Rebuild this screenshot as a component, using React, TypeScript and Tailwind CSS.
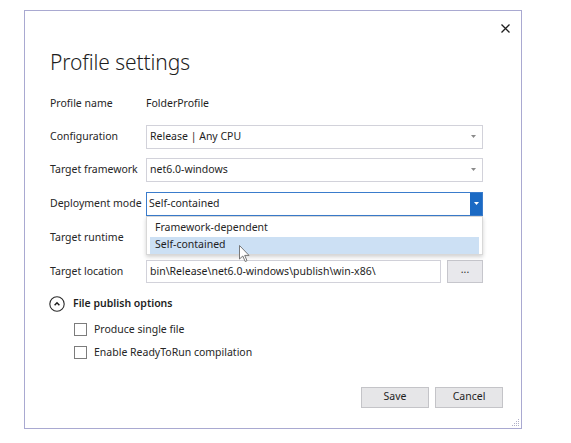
import React from 'react';

const labelCls = 'w-[96px] shrink-0 whitespace-nowrap text-[#262626]';

function Caret({ white = false }: { white?: boolean }) {
  return (
    <svg width="5" height="3" viewBox="0 0 5 3">
      <path d="M0 0 L5 0 L2.5 3 Z" fill={white ? '#ffffff' : '#8a8a8a'} />
    </svg>
  );
}

function Select({ value }: { value: string }) {
  return (
    <div className="flex h-[24px] w-[337px] items-center border border-[#d2d2da] bg-white pl-[3px] pr-[6px]">
      <span className="flex-1 text-[#1e1e1e]">{value}</span>
      <Caret />
    </div>
  );
}

function Row({ label, children, className = '' }: { label: string; children: React.ReactNode; className?: string }) {
  return (
    <div className={`flex h-[24px] w-[433px] items-center ${className}`}>
      <span className={labelCls}>{label}</span>
      {children}
    </div>
  );
}

function Checkbox({ label, className = '' }: { label: string; className?: string }) {
  return (
    <div className={`ml-[24px] flex h-[16px] items-center ${className}`}>
      <div className="h-[13px] w-[13px] border border-[#7c7c7c] bg-white" />
      <span className="ml-[7px] text-[#262626]">{label}</span>
    </div>
  );
}

export default function App() {
  return (
    <div className="h-[443px] w-[571px] bg-white pl-[24px] pt-[10px] font-['Noto_Sans',sans-serif] text-[10.5px]">
      <div className="relative flex h-[419px] w-[498px] flex-col border border-[#a9a9d1] bg-white">
        {/* header */}
        <div className="flex justify-end pr-[11px] pt-[13px]">
          <svg width="9" height="9" viewBox="0 0 9 9">
            <path d="M0.5 0.5 L8.5 8.5 M8.5 0.5 L0.5 8.5" stroke="#1e1e1e" strokeWidth="1.3" />
          </svg>
        </div>

        <div className="flex flex-col pl-[25px]">
          <h1 className="mt-[15px] h-[28px] text-[21px] leading-[28px] font-light tracking-[-0.1px] text-[#1e1e1e]">
            Profile settings
          </h1>

          <Row label="Profile name" className="mt-[15.5px]">
            <span className="text-[#1e1e1e]">FolderProfile</span>
          </Row>

          <Row label="Configuration" className="mt-[9px]">
            <Select value="Release | Any CPU" />
          </Row>

          <Row label="Target framework" className="mt-[9px]">
            <Select value="net6.0-windows" />
          </Row>

          <Row label="Deployment mode" className="relative z-10 mt-[10px]">
            <div className="relative h-[24px] w-[337px]">
              <div className="flex h-full items-center border border-[#3a7ccc] bg-white pl-[2px]">
                <span className="flex-1 text-[#1e1e1e]">Self-contained</span>
                <div className="flex h-full w-[12px] items-center justify-center bg-[#1b6ac4]">
                  <Caret white />
                </div>
              </div>
              {/* open dropdown list */}
              <div className="absolute left-0 top-full flex h-[39px] w-[337px] flex-col border border-[#d8d8d8] bg-white px-[3px] pt-[2px] shadow-[0_2px_4px_rgba(0,0,0,0.18)]">
                <div className="flex h-[18px] items-center pl-[5px] text-[#262626]">Framework-dependent</div>
                <div className="flex h-[17px] items-center bg-[#cce0f4] pl-[5px] text-[#1e1e1e]">Self-contained</div>
              </div>
            </div>
          </Row>

          <Row label="Target runtime" className="mt-[10px]">
            <div className="h-[24px] w-[337px] border border-[#d2d2da] bg-white" />
          </Row>

          <Row label="Target location" className="mt-[10px]">
            <div className="flex h-[23px] w-[295px] items-center border border-[#d2d2da] bg-white pl-[3px] text-[#1e1e1e]">
              bin\Release\net6.0-windows\publish\win-x86\
            </div>
            <div className="ml-[6px] flex h-[23px] w-[36px] items-center justify-center border border-[#c6c6cc] bg-[#e8e8ec] pb-[3px] text-[#333]">
              ...
            </div>
          </Row>

          <div className="mt-[11px] flex h-[18px] items-center">
            <svg width="16" height="16" viewBox="0 0 16 16" className="ml-[-1px]">
              <circle cx="8" cy="8" r="7.2" fill="none" stroke="#2a2a2a" strokeWidth="1.1" />
              <path d="M5.6 9.2 L8 6.8 L10.4 9.2" fill="none" stroke="#1e1e1e" strokeWidth="1.5" />
            </svg>
            <span className="ml-[8px] font-semibold text-[#1e1e1e]">File publish options</span>
          </div>

          <Checkbox label="Produce single file" className="mt-[9px]" />
          <Checkbox label="Enable ReadyToRun compilation" className="mt-[7px]" />

          <div className="mt-[26px] flex justify-end gap-[6px] pr-[18px]">
            <button className="h-[21px] w-[68px] border border-[#c4c4c8] bg-[#e6e6e8] text-[#1e1e1e]">Save</button>
            <button className="h-[21px] w-[68px] border border-[#c4c4c8] bg-[#e6e6e8] text-[#1e1e1e]">Cancel</button>
          </div>
        </div>

        {/* resize grip */}
        <svg width="8" height="8" viewBox="0 0 8 8" className="absolute bottom-[1px] right-[1px]">
          {[
            [6, 0], [6, 2], [6, 4], [6, 6], [4, 2], [4, 4], [4, 6], [2, 4], [2, 6], [0, 6],
          ].map(([x, y]) => (
            <rect key={`${x}-${y}`} x={x} y={y} width="1" height="1" fill="#b0b0c8" />
          ))}
        </svg>

        {/* mouse cursor */}
        <svg width="12" height="18" viewBox="0 0 12 18" className="absolute left-[214px] top-[234px] z-20">
          <path d="M0.5 0.5 L0.5 14 L3.8 11 L6.2 16.5 L8 15.7 L5.7 10.4 L10 10.4 Z" fill="#ffffff" stroke="#6a6a6a" strokeWidth="0.9" />
        </svg>
      </div>
    </div>
  );
}
